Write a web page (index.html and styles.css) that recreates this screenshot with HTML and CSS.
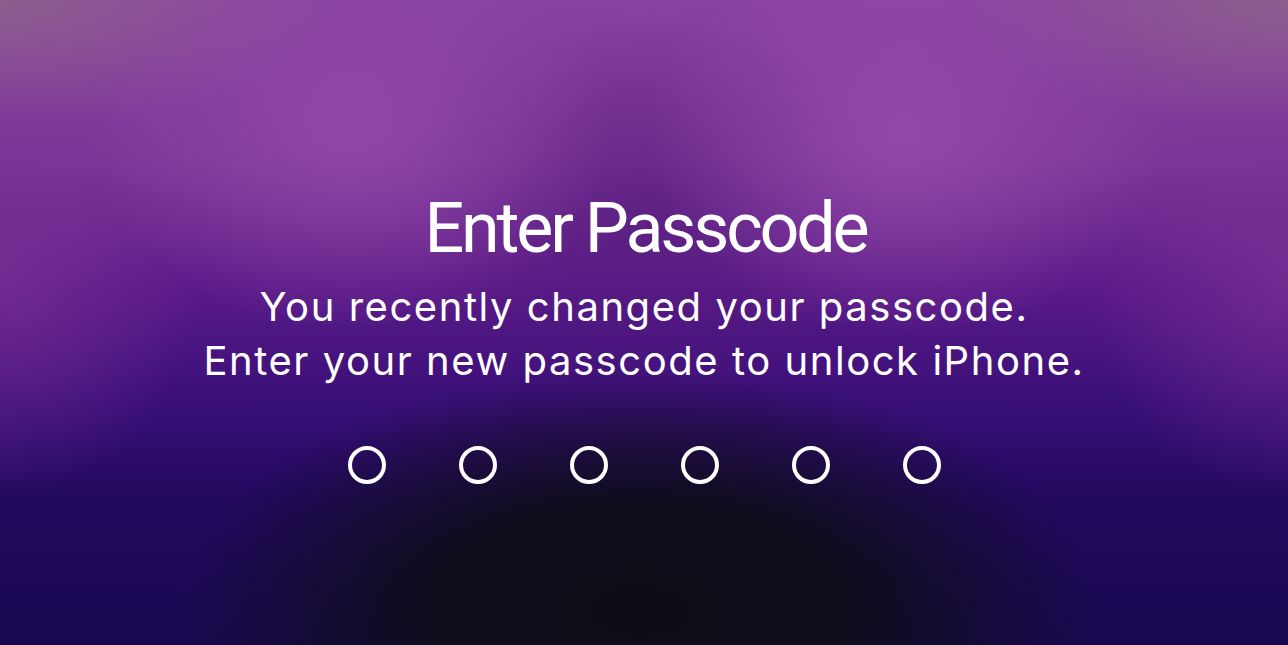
FILE: index.html
```html
<!DOCTYPE html>
<html lang="en">
<head>
    <meta charset="UTF-8">
    <meta name="viewport" content="width=device-width, initial-scale=1.0">
    <title>Enter Passcode</title>
    <link rel="stylesheet" href="styles.css">
</head>
<body>
    <div class="lock">
        <h1 class="lock-title">Enter Passcode</h1>
        <p class="lock-msg">You recently changed your passcode.<br>Enter your new passcode to unlock iPhone.</p>
        <ul class="dots">
            <li></li>
            <li></li>
            <li></li>
            <li></li>
            <li></li>
            <li></li>
        </ul>
    </div>
</body>
</html>
```

FILE: styles.css
```css
*{margin: 0; padding: 0; box-sizing: border-box;}
html, body {height: 100%;}
body {
    font-family: Inter, "Noto Sans", "Liberation Sans", sans-serif;
    color: #fff;
    overflow: hidden;
    background:
        radial-gradient(ellipse 260px 200px at 350px 130px, rgba(150,76,170,0.75), rgba(150,76,170,0) 100%),
        radial-gradient(ellipse 260px 200px at 905px 135px, rgba(152,76,172,0.8), rgba(152,76,172,0) 100%),
        radial-gradient(ellipse 240px 200px at 650px 210px, rgba(80,26,120,0.55), rgba(80,26,120,0) 100%),
        radial-gradient(ellipse 460px 240px at 640px 610px, rgba(14,13,22,1) 0%, rgba(14,13,22,0.9) 45%, rgba(14,13,22,0) 100%),
        radial-gradient(ellipse 330px 130px at 0px 0px, rgba(140,96,140,0.9), rgba(140,96,140,0) 100%),
        radial-gradient(ellipse 330px 130px at 1288px 0px, rgba(140,96,140,0.9), rgba(140,96,140,0) 100%),
        radial-gradient(ellipse 200px 220px at 0px 280px, rgba(122,48,148,0.7), rgba(122,48,148,0) 100%),
        radial-gradient(ellipse 200px 220px at 1288px 280px, rgba(122,48,148,0.7), rgba(122,48,148,0) 100%),
        linear-gradient(180deg, #8a42a0 0%, #7c3598 25%, #5a1a88 45%, #3a0f78 62%, #21095e 78%, #180850 100%);
}
.lock {display: flex; flex-direction: column; align-items: center; padding-top: 193px;}
.lock-title {font-family: Roboto, Inter, sans-serif; font-size: 70px; font-weight: 400; line-height: 70px; letter-spacing: -3.2px; padding-left: 3px;}
.lock-msg {margin-top: 17px; font-size: 40px; line-height: 54px; text-align: center; letter-spacing: 1.55px;}
ul.dots {list-style: none; display: flex; gap: 73px; margin-top: 58px;}
.dots li {width: 38px; height: 38px; border: 4px solid #fff; border-radius: 50%;}
```
